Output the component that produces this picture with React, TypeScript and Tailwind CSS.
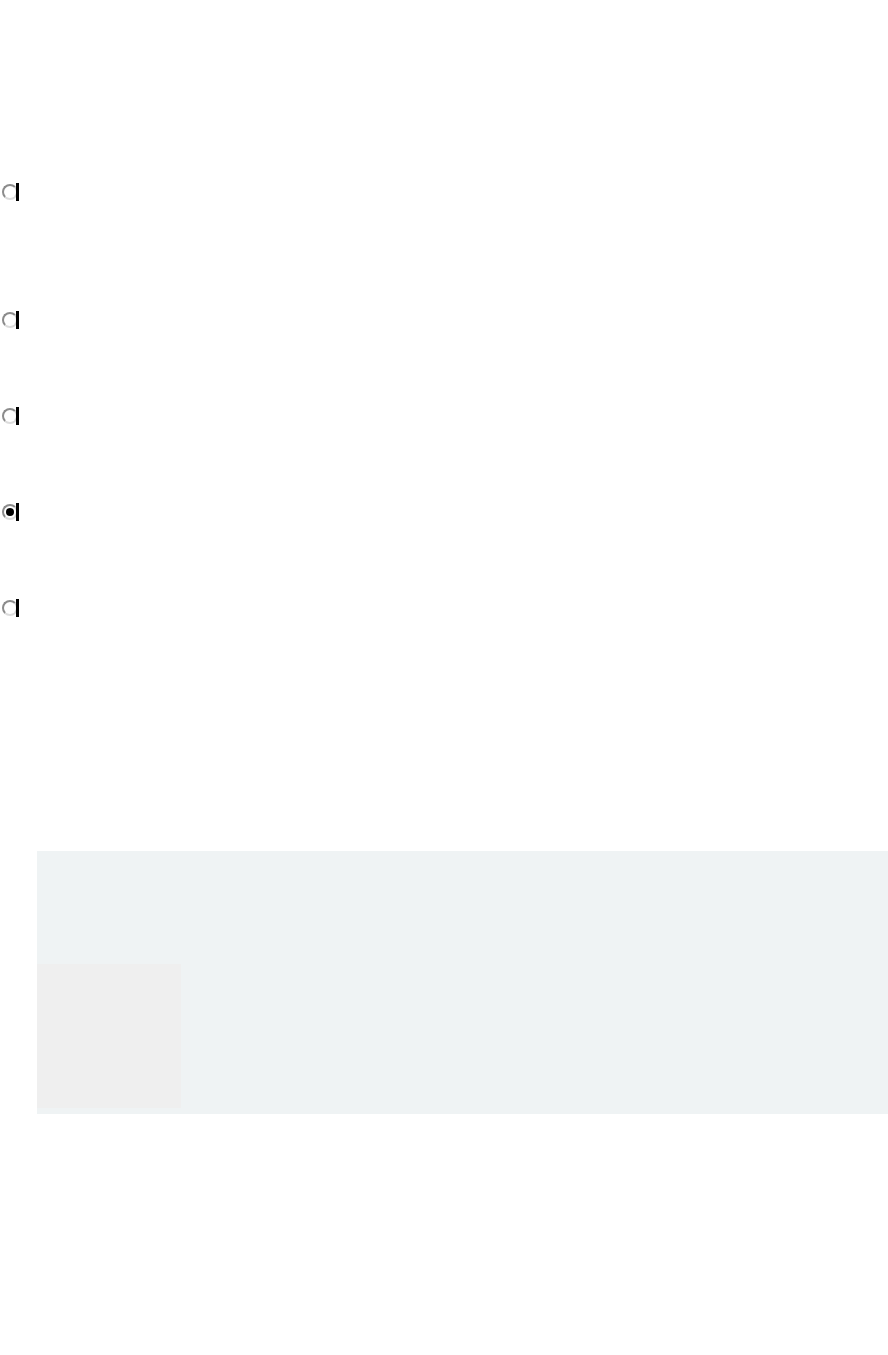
import React from 'react'

const options = [
  { id: 'a', top: 'mt-[184px]', checked: false },
  { id: 'b', top: 'mt-[112px]', checked: false },
  { id: 'c', top: 'mt-[80px]', checked: false },
  { id: 'd', top: 'mt-[80px]', checked: true },
  { id: 'e', top: 'mt-[80px]', checked: false },
]

function Radio({ checked }: { checked: boolean }) {
  return (
    <div className="flex items-center">
      <span className="ml-[2px] flex h-[16px] w-[16px] items-center justify-center rounded-full border-2 border-t-[#8c8c8c] border-l-[#8c8c8c] border-r-[#d4d4d4] border-b-[#dcdcdc] bg-white">
        {checked && <span className="h-[8px] w-[8px] rounded-full bg-black" />}
      </span>
      <span className="-ml-[2px] h-[18px] w-[3px] bg-black" />
    </div>
  )
}

export default function App() {
  return (
    <div className="min-h-[1355px] w-full bg-white font-['Liberation_Sans',sans-serif]">
      <div className="flex flex-col">
        {options.map((o) => (
          <div key={o.id} className={`${o.top} h-[16px] flex items-center`}>
            <Radio checked={o.checked} />
          </div>
        ))}
      </div>

      <div className="ml-[37px] mt-[235px] h-[263px] bg-[#eff3f4] flex flex-col justify-end pb-[6px]">
        <div className="h-[144px] w-[144px] bg-[#efefef]" />
      </div>
    </div>
  )
}
